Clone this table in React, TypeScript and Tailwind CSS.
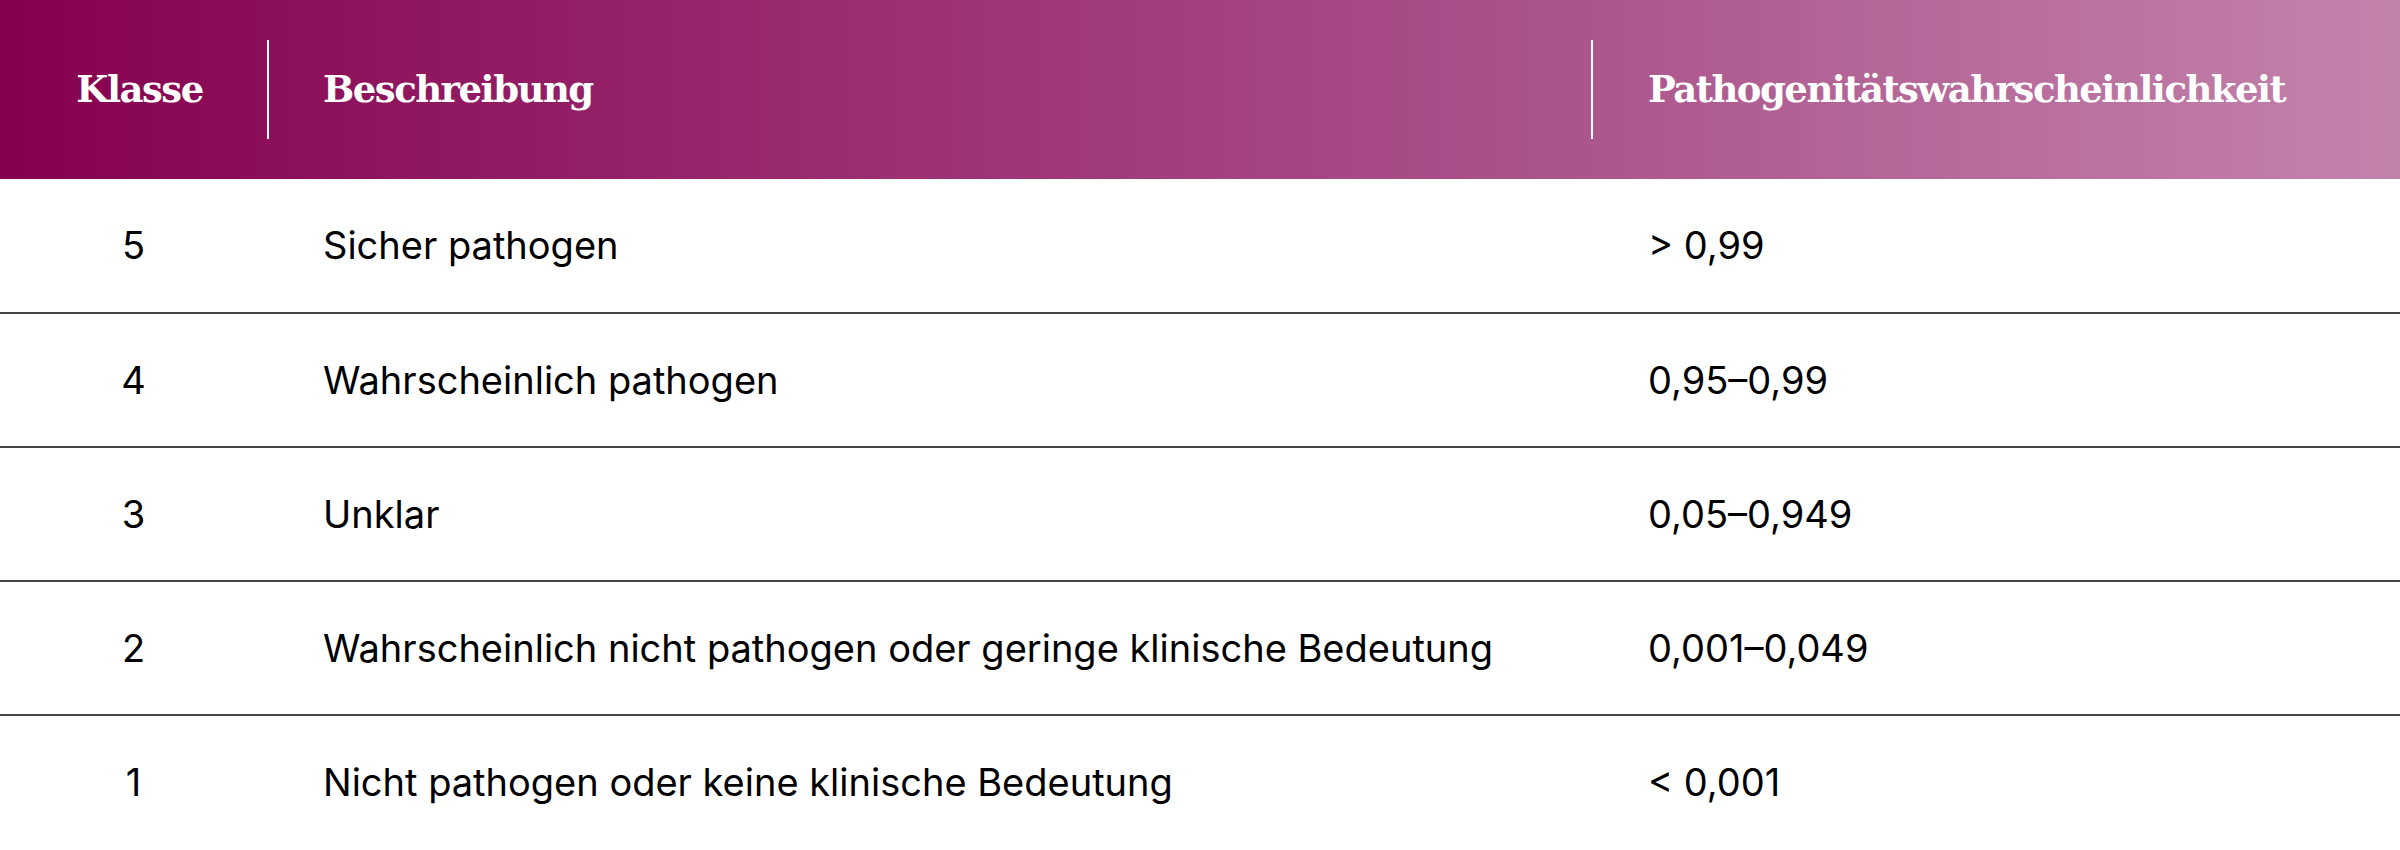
const rows = [
  { klasse: '5', text: 'Sicher pathogen', p: '> 0,99' },
  { klasse: '4', text: 'Wahrscheinlich pathogen', p: '0,95–0,99' },
  { klasse: '3', text: 'Unklar', p: '0,05–0,949' },
  { klasse: '2', text: 'Wahrscheinlich nicht pathogen oder geringe klinische Bedeutung', p: '0,001–0,049' },
  { klasse: '1', text: 'Nicht pathogen oder keine klinische Bedeutung', p: '< 0,001' },
]

export default function App() {
  return (
    <div className="w-[2400px] min-h-[850px] bg-white font-['Inter',_sans-serif] text-black">
      {/* header */}
      <div className="grid h-[179px] grid-cols-[267px_1324px_1fr] items-center bg-[linear-gradient(to_right,#85004f_0%,#a2407e_50%,#c283ab_100%)] text-white">
        <div className="flex h-full items-center justify-center">
          <span className="pl-3 font-['DejaVu_Serif',_serif] text-[37px] font-bold tracking-[-1.5px]">Klasse</span>
        </div>
        <div className="flex h-[99px] items-center border-l-2 border-white pl-[54px]">
          <span className="font-['DejaVu_Serif',_serif] text-[37px] font-bold tracking-[-1.5px]">Beschreibung</span>
        </div>
        <div className="flex h-[99px] items-center border-l-2 border-white pl-[55px]">
          <span className="font-['DejaVu_Serif',_serif] text-[37px] font-bold tracking-[-1.5px]">Pathogenitätswahrscheinlichkeit</span>
        </div>
      </div>

      {rows.map((r, i) => (
        <div
          key={r.klasse}
          className={
            i === 0
              ? 'grid h-[133px] grid-cols-[267px_1324px_1fr] items-center text-[38px]'
              : 'grid h-[134px] grid-cols-[267px_1324px_1fr] items-center border-t-2 border-[#444444] text-[38px]'
          }
        >
          <div className="text-center">{r.klasse}</div>
          <div className="pl-[56px]">{r.text}</div>
          <div className="pl-[57px]">{r.p}</div>
        </div>
      ))}
    </div>
  )
}
